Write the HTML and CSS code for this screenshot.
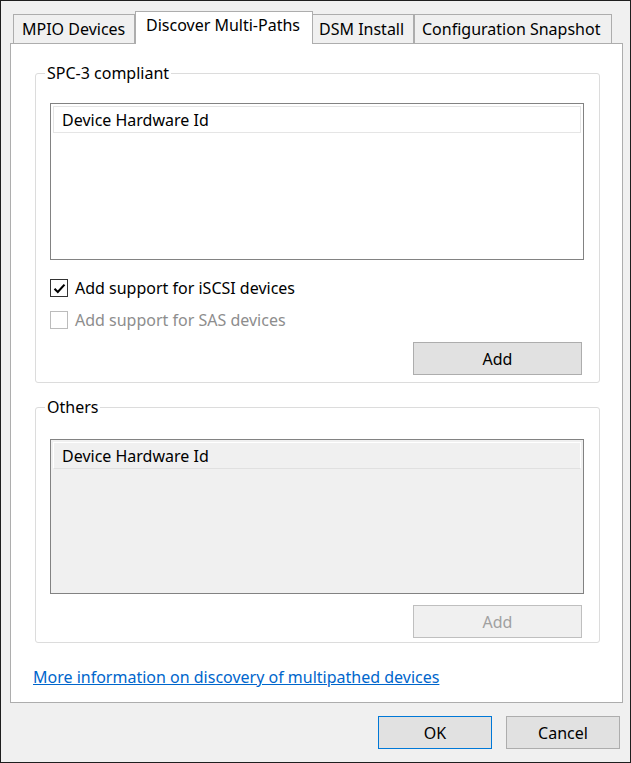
FILE: index.html
```html
<!DOCTYPE html>
<html>
<head>
<meta charset="utf-8">
<link rel="stylesheet" href="styles.css">
</head>
<body>
<div class="window">
  <div class="tabs">
    <div class="tab tab-mpio">MPIO Devices</div>
    <div class="tab tab-sel">Discover Multi-Paths</div>
    <div class="tab tab-dsm">DSM Install</div>
    <div class="tab tab-cfg">Configuration Snapshot</div>
  </div>
  <div class="panel">
    <div class="group group-spc">
      <div class="legend">SPC-3 compliant</div>
      <div class="listbox listbox-spc">
        <div class="list-header">Device Hardware Id</div>
      </div>
      <div class="checks">
        <div class="check">
          <span class="box">
            <svg width="13" height="13" viewBox="0 0 13 13"><path d="M1.5 6.8 L4.8 10 L11.5 2.6" fill="none" stroke="#000" stroke-width="2.1"/></svg>
          </span>
          <span class="check-label">Add support for iSCSI devices</span>
        </div>
        <div class="check check-disabled">
          <span class="box"></span>
          <span class="check-label">Add support for SAS devices</span>
        </div>
      </div>
      <div class="btn-row">
        <div class="btn btn-add">Add</div>
      </div>
    </div>
    <div class="group group-others">
      <div class="legend">Others</div>
      <div class="listbox listbox-others">
        <div class="list-header">Device Hardware Id</div>
      </div>
      <div class="btn-row btn-row-others">
        <div class="btn btn-add btn-disabled">Add</div>
      </div>
    </div>
    <div class="link-row">
      <a class="link" href="#">More information on discovery of multipathed devices</a>
    </div>
  </div>
  <div class="footer">
    <div class="btn btn-dlg btn-default">OK</div>
    <div class="btn btn-dlg">Cancel</div>
  </div>
</div>
</body>
</html>
```
FILE: styles.css
```css
html, body {
  margin: 0;
  padding: 0;
}
body {
  width: 631px;
  height: 763px;
  overflow: hidden;
  font-family: "Noto Sans", "Open Sans", sans-serif;
  font-size: 16px;
  color: #000;
}
.window {
  width: 631px;
  height: 763px;
  box-sizing: border-box;
  border: 1px solid #1e1e1e;
  background: #f0f0f0;
  padding: 10px 7px 0 9px;
}
.tabs {
  display: flex;
  align-items: flex-end;
  height: 32px;
  padding-left: 3px;
  position: relative;
  z-index: 2;
}
.tab {
  box-sizing: border-box;
  height: 29px;
  border: 1px solid #adadad;
  border-bottom: none;
  background: #f0f0f0;
  line-height: 29px;
  padding-left: 8px;
  white-space: nowrap;
  overflow: hidden;
}
.tab-mpio { width: 122px; }
.tab-sel {
  width: 178px;
  height: 33px;
  margin-bottom: -1px;
  background: #fff;
  line-height: 26px;
  padding-left: 10px;
}
.tab-dsm { width: 101px; border-left: none; padding-left: 6px; }
.tab-cfg { width: 198px; padding-left: 7px; }
.panel {
  box-sizing: border-box;
  height: 660px;
  border: 1px solid #adadad;
  background: #fff;
  padding: 29px 22px 0 24px;
}
.group {
  border: 1px solid #dcdcdc;
  border-radius: 3px;
  padding: 0 15px 7px 14px;
}
.group-others {
  margin-top: 24px;
  padding-bottom: 4px;
}
.legend {
  width: fit-content;
  margin: -11px 0 0 -5px;
  padding: 0 2px;
  background: #fff;
  line-height: 21px;
}
.listbox {
  box-sizing: border-box;
  border: 1px solid #828282;
  background: #fff;
  padding: 2px 2px 0 2px;
}
.listbox-spc {
  margin-top: 19px;
  height: 157px;
}
.listbox-others {
  margin-top: 21px;
  height: 155px;
  background: #f0f0f0;
}
.list-header {
  box-sizing: border-box;
  height: 27px;
  border: 1px solid #e5e5e5;
  background: #fff;
  line-height: 27px;
  padding-left: 8px;
}
.listbox-others .list-header {
  background: #f0f0f0;
  border-color: #ffffff;
  border-bottom-color: #e0e0e0;
}
.checks {
  display: flex;
  flex-direction: column;
  gap: 12px;
  margin-top: 18px;
}
.check {
  display: flex;
  align-items: center;
  height: 20px;
  gap: 7px;
}
.box {
  box-sizing: border-box;
  width: 18px;
  height: 18px;
  border: 1px solid #333;
  background: #fff;
  display: flex;
  align-items: center;
  justify-content: center;
}
.check-label { line-height: 21px; padding-top: 1px; }
.check-disabled .box { border-color: #bcbcbc; }
.check-disabled .check-label { color: #8d8d8d; }
.btn-row {
  display: flex;
  justify-content: flex-end;
  margin-top: 12px;
  padding-right: 2px;
}
.btn-row-others { margin-top: 11px; }
.btn {
  box-sizing: border-box;
  border: 1px solid #adadad;
  background: #e1e1e1;
  display: flex;
  align-items: center;
  justify-content: center;
  padding-top: 1px;
}
.btn-add {
  width: 169px;
  height: 33px;
}
.btn-disabled {
  border-color: #bfbfbf;
  background: #f0f0f0;
  color: #a0a0a0;
}
.link-row {
  margin-top: 24px;
  margin-left: -2px;
  line-height: 20px;
}
.link {
  color: #0066cc;
  text-decoration: underline;
}
.footer {
  display: flex;
  justify-content: flex-end;
  gap: 14px;
  padding-top: 13px;
  padding-right: 3px;
}
.btn-dlg {
  width: 114px;
  height: 33px;
}
.btn-default {
  border-color: #0078d7;
}
```
